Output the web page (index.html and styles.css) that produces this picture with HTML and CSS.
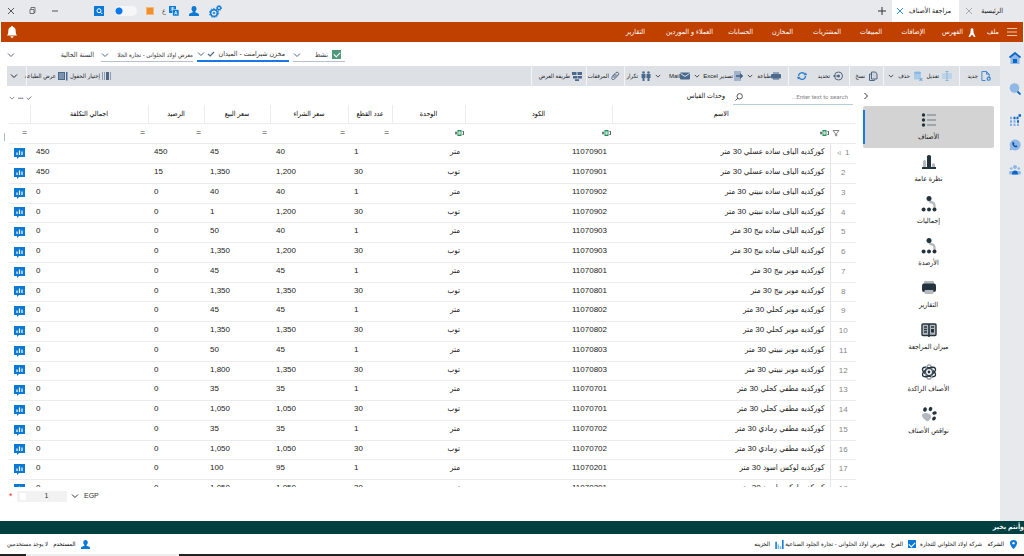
FILE: index.html
```html
<!DOCTYPE html>
<html lang="ar" dir="rtl">
<head>
<meta charset="utf-8">
<title>مراجعة الأصناف</title>
<link rel="stylesheet" href="styles.css">
</head>
<body>
<svg class="sprite" aria-hidden="true">
  <symbol id="chev" viewBox="0 0 8 8"><path d="M1 2.500 4 5.500 7 2.500" fill="none" stroke="currentColor"/></symbol>
  <symbol id="tick" viewBox="0 0 8 8"><path d="M1 4 3.200 6 7 2" fill="none" stroke="currentColor" stroke-width="1.200"/></symbol>
  <symbol id="cross" viewBox="0 0 8 8"><path d="M1 1 7 7M7 1 1 7" fill="none" stroke="currentColor"/></symbol>
  <symbol id="user" viewBox="0 0 12 12"><path d="M6 0c2 0 3 1.500 3 3.200C9 5 8 6 7.500 6.500v1L11 9c1 .5 1 1 1 3H0c0-2 0-2.500 1-3l3.500-1.500v-1C4 6 3 5 3 3.200 3 1.500 4 0 6 0z" fill="#0a7ad6"/></symbol>
  <symbol id="chat" viewBox="0 0 11 11"><path d="M0 0h11v9H5L3 11V9H0z" fill="#0a7ad6"/><path d="M3 4.500v2.500M5.500 2.500V7M8 3.500V7" stroke="#fff" stroke-width="1.200"/></symbol>
  <symbol id="abc" viewBox="0 0 9 8"><path d="M1 2.500v3M.2 4h2M7.500 2.500h1.200v3H7.500" fill="none" stroke="#444"/><rect x="2.500" y="1" width="4" height="6" fill="#1d9457"/><rect x="3.800" y="2.800" width="1.400" height="2.400" fill="none" stroke="#fff" stroke-width=".7"/></symbol>
  <symbol id="flow" viewBox="0 0 16 16"><path d="M8 2.500c-.5 6 5.500 2 5.500 7v4" fill="none" stroke="#b3b9bf" stroke-width="2.200"/><g fill="#23343f"><circle cx="8" cy="2.500" r="2.500"/><circle cx="2.600" cy="13.500" r="2"/><circle cx="8" cy="13.500" r="2"/><circle cx="13.500" cy="13.500" r="2"/></g></symbol>
</svg>

<header class="titlebar">
  <nav class="tabs">
    <button class="tab home">الرئيسية</button>
    <button class="close" aria-label="إغلاق"><svg class="i8"><use href="#cross"/></svg></button>
    <div class="tab-open"><button class="tab">مراجعة الأصناف</button><button class="close blue" aria-label="إغلاق"><svg class="i8"><use href="#cross"/></svg></button></div>
    <button class="plus" aria-label="جديد"><svg class="i8" viewBox="0 0 8 8"><path d="M4 0v8M0 4h8" stroke="#333"/></svg></button>
  </nav>
  <div class="window" dir="ltr">
    <button aria-label="إغلاق النافذة"><svg class="i8"><use href="#cross"/></svg></button>
    <button aria-label="استعادة"><svg class="i8" viewBox="0 0 8 8"><path d="M2 2V.5h4v5h-1M1 2.500h4v4H1z" fill="none" stroke="#555" stroke-width=".8"/></svg></button>
    <button aria-label="تصغير"><svg class="i8" viewBox="0 0 8 8"><path d="M1 4h6" stroke="#555"/></svg></button>
    <button class="find" aria-label="بحث"><svg viewBox="0 0 10 10"><rect width="10" height="10" fill="#0a7ad6"/><circle cx="5" cy="4.700" r="2" fill="none" stroke="#fff"/><path d="m6.500 6.200 1.700 1.700" stroke="#fff"/></svg></button>
    <input class="switch" type="checkbox" aria-label="الوضع">
    <span class="swatch"></span>
    <span class="lang">ع</span>
    <button aria-label="ترجمة"><svg viewBox="0 0 10 10"><rect width="7" height="7" fill="#0a7ad6"/><rect x="3.500" y="3.500" width="6.500" height="6.500" fill="#0a7ad6" stroke="#fff" stroke-width=".5"/><path d="M1.500 2h4M3.500 1v1c0 1-1 2-2 2.500M5.500 8.500 6.800 5 8 8.500M6 7.500h1.700" fill="none" stroke="#fff" stroke-width=".7"/></svg></button>
    <button aria-label="المستخدم"><svg viewBox="0 0 12 12"><use href="#user"/></svg></button>
    <button aria-label="الإعدادات"><svg class="gears" viewBox="0 0 13 13"><g fill="none" stroke="#0a7ad6"><circle cx="5" cy="8" r="3.300" stroke-width="1.500"/><circle cx="5" cy="8" r="4.600" stroke-dasharray="1.500 1.400"/><circle cx="5" cy="8" r=".8"/><circle cx="10" cy="3" r="1.600" stroke-width="1.200"/><circle cx="10" cy="3" r="2.500" stroke-dasharray="1 1"/></g></svg></button>
  </div>
</header>

<nav class="menubar">
  <button class="burger" aria-label="القائمة"><svg viewBox="0 0 10 10"><path d="M0 1.500h10M0 5h10M0 8.500h10" stroke="#f3c6ae"/></svg></button>
  <a href="#" class="m-file">ملف</a>
  <svg class="ribbon" viewBox="0 0 8 9"><circle cx="4" cy="1.800" r="1.500" fill="#fff"/><path d="M2.500 3h3v1.500L7.500 9H6L4 6.500 2 9H.5l2-4.500z" fill="#fff"/></svg>
  <a href="#" class="m-index">الفهرس</a>
  <a href="#" class="m-add">الإضافات</a>
  <a href="#" class="m-sales">المبيعات</a>
  <a href="#" class="m-buy">المشتريات</a>
  <a href="#" class="m-store">المخازن</a>
  <a href="#" class="m-acc">الحسابات</a>
  <a href="#" class="m-cust">العملاء و الموردين</a>
  <a href="#">التقارير</a>
  <button class="bell" aria-label="التنبيهات"><svg viewBox="0 0 10 12"><path d="M5 0c.7 0 1 .5 1 1 2 .5 2.700 2 2.700 4 0 2.500.5 3.500 1.300 4.500H0C.8 8.500 1.300 7.500 1.300 5c0-2 .7-3.500 2.700-4 0-.5.300-1 1-1zM3.500 10.200h3c0 2-3 2-3 0z" fill="#fff"/></svg></button>
</nav>

<div class="body">
  <aside class="rail">
    <button class="far" aria-label="المنزل"><svg viewBox="0 0 12 12"><path d="M1.500 5v7h9V5L6 1.500z" fill="#8fb8e6"/><path d="M.5 5.500 6 1l5.500 4.500" fill="none" stroke="#0a66c8" stroke-width="1.800"/><rect x="4" y="7" width="4" height="4" fill="#0a66c8"/></svg></button>
    <button class="far" aria-label="بحث"><svg viewBox="0 0 12 12"><circle cx="5.500" cy="5" r="4.800" fill="#8fb8e6"/><path d="m8.500 8.500 3 3" stroke="#0a66c8" stroke-width="1.800"/></svg></button>
    <button aria-label="التطبيقات"><svg viewBox="0 0 12 12"><path d="M1 4h2M1 7.500h2M1 11h2M4.500 7.500h2M4.500 11h2M8 11h2" stroke="#7fb0e6" stroke-width="2.400"/><path d="M4.500 4h2M8 7.500h2M7.500 4h2M9.500 1.500H12" stroke="#0a66c8" stroke-width="2.400"/></svg></button>
    <button aria-label="واتساب"><svg viewBox="0 0 12 12"><path d="M6 .5a5.500 5.500 0 1 1-2.500 10.300L.5 11.500l.8-3A5.500 5.500 0 0 1 6 .5z" fill="#8fb8e6"/><path d="M3.500 3.500c1-1 1.500 0 1.800 1 .2.800-.7.700 0 1.500s1.200 1 1.700.6c.8-.5 2 .8 1.200 1.400C6 9.500 2.500 6 3.500 3.500z" fill="#0a4fb0"/></svg></button>
    <button aria-label="الفريق"><svg viewBox="0 0 12 12"><g fill="#8fb8e6"><circle cx="6" cy="3" r="2"/><circle cx="2.200" cy="4.500" r="1.300"/><circle cx="9.800" cy="4.500" r="1.300"/><rect y="7" width="12" height="3.500" rx="1.500"/></g><path d="M3 10.500C3 8 4 6.500 6 6.500s3 1.500 3 4z" fill="#0a66c8"/></svg></button>
  </aside>

  <main class="main">
    <form class="filters">
      <label class="f-year"><select aria-label="السنة"><option>السنة الحالية</option></select><svg class="i8"><use href="#chev"/></svg></label>
      <label class="field f-branch"><select aria-label="الفرع"><option>معرض اولاد الحلوانى - تجارة الجلا</option></select><svg class="i8"><use href="#chev"/></svg></label>
      <label class="field focus f-store"><input type="text" aria-label="المخزن" value="مخزن شبرامنت - الميدان"><svg class="i8"><use href="#tick"/></svg><svg class="i8"><use href="#chev"/></svg></label>
      <label class="field f-active"><input class="green" type="checkbox" checked><span>نشط</span><svg class="i8"><use href="#chev"/></svg></label>
    </form>

    <div class="toolbar">
      <button class="t-new"><svg viewBox="0 0 11 11"><path d="M1 .5h5l3 3v3M5 10.500H1V.5M6 .5v3h3" fill="none" stroke="#2f7fd0"/><circle cx="8.500" cy="8.500" r="1.700" fill="none" stroke="#2f7fd0" stroke-width="1.300"/></svg>جديد</button>
      <button class="t-edit line"><svg viewBox="0 0 10 10"><rect y="2" width="10" height="6" fill="#bcd3e8"/><path d="M3.500.5h3M5 .5v9M3.500 9.500h3" stroke="#8fb3d6"/></svg>تعديل</button>
      <button class="t-del"><svg viewBox="0 0 10 10"><path d="M1 1.500h7v7H1z" fill="#a9cbea"/><ellipse cx="4.500" cy="1.800" rx="3.500" ry="1.300" fill="#8ab8e3"/><path d="m6.500 7 3 3M9.500 7l-3 3" stroke="#5b9bd8"/></svg>حذف</button>
      <button class="t-arrow" aria-label="المزيد"><svg class="i6" viewBox="0 0 8 8"><use href="#chev"/></svg></button>
      <button class="t-copy line"><svg viewBox="0 0 10 10"><path d="M3.500 1h4l1.500 2v5H3.500zM3 3H1.500v6.500h5V8.500" fill="#cdd4dc" stroke="#51677f"/></svg>نسخ</button>
      <button class="t-select line"><svg viewBox="0 0 10 10"><circle cx="5.500" cy="5" r="4" fill="none" stroke="#51677f"/><circle cx="5.500" cy="5" r="1.500" fill="#51677f"/><path d="M0 5h5" stroke="#51677f"/></svg>تحديد</button>
      <button class="t-refresh" aria-label="تحديث"><svg viewBox="0 0 10 10"><path d="M1.500 5a3.500 3.500 0 0 1 6.500-1.500M8.500 5A3.500 3.500 0 0 1 2 6.700" fill="none" stroke="#2f7fd0" stroke-width="1.300"/><path d="M6.500 4.300h3.500L9 1.500zM3.500 5.700H0L1 8.500z" fill="#2f7fd0"/></svg></button>
      <button class="t-print line"><svg viewBox="0 0 10 10"><rect x="2" y="1" width="6" height="8" fill="#90a2b8"/><rect y="3" width="10" height="4.500" rx="1" fill="#4b698d"/></svg>طباعة</button>
      <button class="t-arrow" aria-label="المزيد"><svg class="i6" viewBox="0 0 8 8"><use href="#chev"/></svg></button>
      <button class="t-excel"><svg viewBox="0 0 10 10"><rect x="1" y="0" width="7" height="10" fill="#a3b3c8"/><path d="M3 5h6M7 2.800 9.300 5 7 7.200" fill="none" stroke="#3f628c" stroke-width="1.400"/></svg>تصدير Excel</button>
      <button class="t-arrow" aria-label="المزيد"><svg class="i6" viewBox="0 0 8 8"><use href="#chev"/></svg></button>
      <button class="t-mail"><svg viewBox="0 0 10 10"><rect y="1.500" width="10" height="7" rx="1" fill="#4b698d"/><path d="m.5 2.500 4.500 3 4.500-3" fill="none" stroke="#dde1e6"/></svg>Mail</button>
      <button class="t-arrow" aria-label="المزيد"><svg class="i6" viewBox="0 0 8 8"><use href="#chev"/></svg></button>
      <button class="t-repeat"><svg viewBox="0 0 10 10"><g fill="#4b698d"><circle cx="2.500" cy="1.500" r="1.300"/><circle cx="7.500" cy="1.500" r="1.300"/><path d="M.5 3h4v4h-1v3h-2V7h-1zM5.500 3h4v4h-1v3h-2V7h-1z"/></g></svg>تكرار</button>
      <button class="t-clip line"><svg viewBox="0 0 10 10"><path d="M2 5.500 6 1.500c1.500-1 3.500.7 2.500 2.200L4.500 8C3 9.500 1 8 2 6.500l3.500-3.500M3.500 7l3.700-3.700" fill="none" stroke="#51677f"/></svg>المرفقات</button>
      <button class="t-view line"><svg viewBox="0 0 10 10"><path d="M0 1h4.500v3H0zM5.500 1H10v3H5.500zM1 5h4v2.500H1zM5.500 5H10v2.500H5.500zM3 8.300h4V10H3z" fill="#4b698d"/></svg>طريقة العرض</button>
      <span class="fill line"></span>
      <button class="t-fields"><svg viewBox="0 0 10 10"><path d="M.5 1v8M2.500 1v8M8.500 1v8" stroke="#8a9db4"/><rect x="4" y="1" width="3" height="8" fill="#51677f"/></svg>إختيار الحقول</button>
      <button class="t-preview"><svg viewBox="0 0 10 10"><rect x="0" y="1" width="7" height="8" fill="#4b698d"/><path d="M1 3h5M1 5h5M1 7h5" stroke="#dde1e6" stroke-width=".7"/><rect x="8" y="1" width="1.500" height="8.500" fill="#4b698d"/></svg>عرض الطباعة</button>
      <button class="t-more line" aria-label="المزيد"><svg class="i8"><use href="#chev"/></svg></button>
    </div>

    <div class="content">
      <nav class="side">
        <button class="collapse" aria-label="طي"><svg class="i8" viewBox="0 0 8 8"><path d="m2.500 1 3 3-3 3" fill="none" stroke="#333"/></svg></button>
        <a href="#" class="active"><svg viewBox="0 0 16 16"><path d="M6 3h9M6 8h9M6 13h9" stroke="#8f969c" stroke-width="1.500"/><g fill="#23343f"><circle cx="2.500" cy="3" r="1.700"/><circle cx="2.500" cy="8" r="1.700"/><circle cx="2.500" cy="13" r="1.700"/></g></svg>الأصناف</a>
        <a href="#"><svg viewBox="0 0 16 16"><path d="M2 14V7q1.500-2 3 0v7zM11 14v-4q1.500-1.500 3 0v4z" fill="#b3b9bf"/><path d="M6 14V2q2-2 4 0v12z" fill="#23343f"/><path d="M1 14h14" stroke="#23343f" stroke-width="2"/></svg>نظرة عامة</a>
        <a href="#"><svg><use href="#flow"/></svg>إجماليات</a>
        <a href="#"><svg><use href="#flow"/></svg>الأرصدة</a>
        <a href="#"><svg viewBox="0 0 16 16"><rect x="3" y="1" width="10" height="4" rx="1" fill="#b3b9bf"/><rect x="1" y="3.500" width="14" height="8.500" rx="2" fill="#23343f"/><rect x="3.500" y="10" width="9" height="4" rx="1" fill="#b3b9bf"/></svg>التقارير</a>
        <a href="#"><svg viewBox="0 0 16 16"><rect x="1" y="2" width="14" height="11.500" rx="1" fill="#b3b9bf" stroke="#23343f" stroke-width="1.400"/><path d="M8 2v13" stroke="#23343f" stroke-width="1.600"/><path d="M3 5h3M3 7.500h3M3 10h3M10 5h3" stroke="#23343f" stroke-width="1.300"/><rect x="10" y="7" width="3" height="3.500" fill="#23343f"/></svg>ميزان المراجعة</a>
        <a href="#"><svg viewBox="0 0 16 16"><g fill="none" stroke="#23343f" stroke-width="1.400"><ellipse cx="8" cy="8" rx="7.300" ry="3.500" transform="rotate(30 8 8)"/><ellipse cx="8" cy="8" rx="7.300" ry="3.500" transform="rotate(90 8 8)" stroke="#9da5ac"/><ellipse cx="8" cy="8" rx="7.300" ry="3.500" transform="rotate(150 8 8)"/></g><circle cx="8" cy="8" r="3.500" fill="#fff" stroke="#23343f"/><circle cx="8" cy="8" r="1.400" fill="#23343f"/></svg>الأصناف الراكدة</a>
        <a href="#"><svg viewBox="0 0 16 16"><path d="M2 7.500c3-1.500 7 0 8 2 1 2-1 3.500-2 5-2 1.500-3 .5-3.500-.5C1.500 12.500 0 9 2 7.500z" fill="#b3b9bf"/><g fill="#23343f"><ellipse cx="4" cy="3.500" rx="1.800" ry="2.200" transform="rotate(30 4 3.500)"/><ellipse cx="9.500" cy="3" rx="1.800" ry="2.200" transform="rotate(20 9.500 3)"/><ellipse cx="13.500" cy="7" rx="2.200" ry="1.700" transform="rotate(-20 13.500 7)"/><ellipse cx="13" cy="12.500" rx="2.200" ry="1.700" transform="rotate(-50 13 12.500)"/></g></svg>نواقص الأصناف</a>
      </nav>

      <section class="sheet">
        <div class="searchrow">
          <label class="search"><input type="text" aria-label="بحث" placeholder="Enter text to search..."><svg class="i8" viewBox="0 0 8 8"><circle cx="4.700" cy="3.300" r="2.700" fill="none" stroke="#444" stroke-width=".9"/><path d="M2.800 5.200.5 7.500" stroke="#444"/></svg></label>
          <a href="#" class="units">وحدات القياس</a>
          <div class="mini"><svg class="i6" viewBox="0 0 8 8"><use href="#tick"/></svg><span class="dots">•••</span><svg class="i6" viewBox="0 0 8 8"><use href="#chev"/></svg></div>
        </div>
        <div class="scroll">
          <table>
            <colgroup><col class="c-n"><col><col class="c-code"><col class="c-unit"><col class="c-count"><col class="c-buy"><col class="c-sale"><col class="c-bal"><col class="c-total"><col class="c-icon"></colgroup>
            <thead>
              <tr class="heads"><th></th><th>الاسم</th><th>الكود</th><th>الوحدة</th><th>عدد القطع</th><th>سعر الشراء</th><th>سعر البيع</th><th>الرصيد</th><th>اجمالي التكلفة</th><th></th></tr>
              <tr class="ops"><td class="funnel"><svg class="i8" viewBox="0 0 8 8"><path d="M1 1.500h6L4.700 4.300V7l-1.400-.7v-2z" fill="none" stroke="#666" stroke-width=".8"/></svg></td><td class="match"><svg><use href="#abc"/></svg></td><td class="match"><svg><use href="#abc"/></svg></td><td class="match"><svg><use href="#abc"/></svg></td><td>=</td><td>=</td><td>=</td><td>=</td><td>=</td><td>=</td></tr>
            </thead>
            <tbody id="rows"></tbody>
          </table>
        </div>
        <div class="pager" dir="ltr">
          <span class="star">*</span>
          <label class="rate"><span></span><input type="text" value="1" aria-label="سعر الصرف"></label>
          <button aria-label="العملة"><svg class="i8"><use href="#chev"/></svg></button>
          <span>EGP</span>
        </div>
      </section>
      <div class="grip"></div>
    </div>
  </main>
</div>

<div class="ticker">وأنتم بخير</div>
<footer class="status">
  <svg viewBox="0 0 10 10"><path d="M5 0c5 0 5.500 5 0 10C-.5 5 0 0 5 0z" fill="#0a7ad6"/><circle cx="5" cy="3.500" r="1.300" fill="#fff"/></svg>
  <b class="s-co">الشركة</b><span class="s-coname">شركة اولاد الحلواني للتجارة</span>
  <input class="bluebox" type="checkbox" id="br" checked><label for="br" class="s-br">الفرع</label><span class="s-brname">معرض اولاد الحلوانى - تجارة الجلود الصناعية</span>
  <svg viewBox="0 0 10 10"><path d="M1.200 2v8M8.700 0v10" stroke="#0a7ad6" stroke-width="1.700"/><path d="M3.700 5v5M6.200 7v3" stroke="#7db8ea" stroke-width="1.700"/></svg>
  <b>الخزينه</b>
  <span class="fill"></span>
  <svg viewBox="0 0 12 12"><use href="#user"/></svg><b class="s-user">المستخدم</b><span>لا يوجد مستخدمين</span>
</footer>
<div class="taskbar"><span></span></div>
<script src="app.js"></script>
</body>
</html>
```
FILE: styles.css
```css
* { box-sizing: border-box; }
body {
  margin: 0; height: 100vh; display: flex; flex-direction: column; overflow: hidden;
  background: #fff; color: #333; font: 7px/10px "Liberation Sans", "DejaVu Sans Condensed", "DejaVu Sans", sans-serif;
}
button, input, select { font: inherit; color: inherit; background: none; border: 0; padding: 0; margin: 0; outline: 0; }
button { display: flex; align-items: center; white-space: nowrap; flex: none; }
a { color: inherit; text-decoration: none; white-space: nowrap; }
svg { flex: none; display: block; width: 10px; height: 10px; }
symbol { overflow: visible; }
.sprite { position: absolute; width: 0; height: 0; }
.i8 { width: 8px; height: 8px; }
.i6 { width: 6px; height: 6px; }
.fill { flex: 1; }

.titlebar { display: flex; justify-content: space-between; height: 22px; flex: none; background: #e8e9ed; }
.tabs { display: flex; align-items: center; padding-right: 21px; }
.tab { color: #111; }
.home { width: 30px; }
.close { color: #aaa; }
.blue { color: #2f8fdc; }
.tab-open { display: flex; align-items: center; justify-content: space-between; width: 67px; height: 22px; margin-right: 6px; padding: 0 8px 0 4px; background: #fff; }
.plus { margin-right: 6px; }
.window { display: flex; align-items: center; padding-left: 7px; color: #555; }
.window button { width: 22px; }
.window .find { width: 21px; margin-left: 21px; }
.switch { appearance: none; width: 22px; height: 10px; border-radius: 5px; background: radial-gradient(circle at 4px 5px, #0a78f0 3px, #f6f6f8 4px); }
.swatch { width: 8px; height: 8px; margin: 0 8px 0 9px; background: #f0902c; border: 1px solid #f7b877; }
.lang { width: 7px; }
.window .gears { width: 13px; height: 13px; }
.window .lang ~ button { width: 20px; }

.menubar { display: flex; align-items: center; height: 20px; flex: none; margin: 0 1px; padding: 0 6px 0 5px; background: #c04000; color: #fff; }
.menubar a { flex: none; }
.burger { width: 18px; }
.m-file { width: 23px; }
.ribbon { width: 8px; height: 9px; margin-left: 5px; }
.m-index { width: 38px; }
.m-add { width: 43px; }
.m-sales { width: 41px; }
.m-buy { width: 48px; }
.m-store { width: 40px; }
.m-acc { width: 40px; }
.m-cust { width: 68px; }
.bell { margin-right: auto; }
.bell svg { width: 12px; height: 12px; }

.body { flex: 1; min-height: 0; display: flex; }
.rail { width: 24px; flex: none; display: flex; flex-direction: column; align-items: flex-start; gap: 13px; padding: 10px 3px 0 0; background: #e8e9ed; }
.rail .far { margin-bottom: 6px; }
.rail svg { width: 12px; height: 12px; }
.main { flex: 1; min-width: 0; display: flex; flex-direction: column; }

.filters { display: flex; flex-direction: row-reverse; justify-content: flex-start; align-items: center; height: 24px; padding-left: 7px; gap: 4px; }
.filters label { display: flex; align-items: center; height: 14px; margin-top: 2px; }
.filters select { appearance: none; flex: 1; min-width: 0; overflow: hidden; }
.filters input[type="text"] { flex: 1; min-width: 0; }
.filters svg { color: #51677f; }
.field { border-bottom: 1px solid #b9bfd0; }
.f-year { width: 87px; }
.filters .f-branch { width: 92px; margin-left: 3px; font-size: 6px; }
.f-store { width: 92px; padding-right: 4px; gap: 2px; }
.focus { border-bottom: 2px solid #1a78e6; }
.f-active { width: 52px; padding-right: 4px; gap: 4px; }
.f-active svg { margin-right: auto; }
.green { appearance: none; width: 9px; height: 9px; background: #4f9a7c; }
.green::after, .bluebox::after { content: ""; display: block; width: 3px; height: 5px; margin: 1px auto; border: solid #fff; border-width: 0 1px 1px 0; transform: rotate(45deg); }

.toolbar { display: flex; align-items: stretch; height: 20px; flex: none; margin-left: 7px; padding-right: 9px; background: #dde1e6; color: #222; font-size: 6px; }
.toolbar button { gap: 3px; }
.line { border-right: 1px solid #f3f5f7; }
.t-new { width: 31px; }
.toolbar .t-edit { width: 37px; padding-right: 7px; }
.t-del { width: 29px; }
.t-arrow { width: 10px; }
.toolbar .t-copy { width: 34px; padding-right: 5px; }
.toolbar .t-select { width: 43px; padding-right: 6px; }
.t-refresh { width: 18px; }
.toolbar .t-print { width: 36px; padding-right: 7px; gap: 0; }
.toolbar .t-excel { width: 43px; gap: 0; }
.toolbar .t-mail { width: 29px; gap: 0; }
.t-repeat { width: 26px; }
.toolbar .t-clip { width: 38px; padding-right: 4px; gap: 1px; }
.toolbar .t-view { width: 55px; padding-right: 4px; gap: 2px; }
.t-fields { width: 44px; }
.toolbar .t-fields, .toolbar .t-preview { gap: 2px; }
.t-preview { width: 41px; }
.toolbar .t-more { width: 20px; padding-right: 8px; }

.content { flex: 1; min-height: 0; display: flex; }
.side { width: 137px; flex: none; display: flex; flex-direction: column; padding-right: 6px; }
.collapse { height: 20px; padding-right: 124px; }
.side a { height: 42px; display: flex; flex-direction: column; align-items: center; gap: 3px; padding-top: 6px; line-height: 12px; color: #111; }
.side a svg { width: 16px; height: 16px; }
.side .active { background: linear-gradient(#1a78e6, #1a78e6) left center / 2px 34px no-repeat #d3d3d3; border-radius: 2px; }

.sheet { flex: 1; min-width: 0; display: flex; flex-direction: column; padding: 0 7px 0 4px; }
.grip { width: 1px; height: 8px; flex: none; margin: 47px 0 0 4px; background: #b3b9cf; }
.searchrow { display: flex; align-items: center; height: 19px; flex: none; }
.search { display: flex; align-items: center; width: 120px; height: 14px; margin: 4px 3px 0 8px; padding: 0 5px 0 2px; border-bottom: 1px solid #b7cde2; }
.search input { flex: 1; min-width: 0; font-family: Roboto, sans-serif; font-size: 6px; }
.search input::placeholder { color: #888; }
.units { color: #111; }
.mini { display: flex; align-items: center; gap: 3px; margin-right: auto; padding-top: 5px; color: #667; }
.dots { font-size: 5px; }

.scroll { flex: 1; min-height: 0; overflow: hidden; }
table { width: 100%; table-layout: fixed; border-collapse: collapse; color: #222; font-size: 8px; line-height: 12px; }
.c-n { width: 26px; }
.c-code { width: 147px; }
.c-unit { width: 73px; }
.c-count { width: 44px; }
.c-buy { width: 78px; }
.c-sale { width: 66px; }
.c-bal { width: 56px; }
.c-total { width: 118px; }
.c-icon { width: 21px; }
th, td { padding: 0; border-bottom: 1px solid #ebecf0; white-space: nowrap; overflow: hidden; }
th { font-size: 7px; font-weight: normal; color: #000; border-left: 1px solid #ebecf0; }
th:first-child, th:last-child { border-left: 0; }
tr { height: 20px; }
.heads { height: 18px; }
tbody tr:nth-child(4n) { height: 19px; }
.ops td { padding-right: 3px; text-align: right; font-weight: bold; color: #888; }
.ops .match { padding-right: 1px; }
.match svg { width: 9px; height: 8px; }
.ops .funnel { padding-right: 16px; }
.num { text-align: center; color: #888; border-left: 1px solid #e4e5ea; }
.name, .unit, .code { padding-right: 5px; text-align: right; }
td.name, td.unit, td.code, td.val { padding-bottom: 2px; }
.val { padding-left: 6px; text-align: left; direction: ltr; }
.chat { padding-right: 5px; }
.chat svg { width: 11px; height: 11px; }

.pager { display: flex; align-items: center; height: 34px; flex: none; padding-bottom: 16px; }
.star { width: 8px; color: #f03030; font-size: 9px; }
.rate { display: flex; align-items: center; width: 50px; height: 11px; padding-left: 3px; background: #f2f2f2; }
.rate span { width: 6px; height: 7px; background: #fff; }
.rate input { flex: 1; min-width: 0; text-align: center; }
.pager button { margin: 0 5px 0 4px; }

.ticker { height: 13px; flex: none; background: #004040; color: #fff; line-height: 12px; font-weight: bold; }
.status { display: flex; align-items: center; height: 20px; flex: none; padding: 0 6px 0 7px; gap: 5px; white-space: nowrap; color: #222; font-size: 6px; }
.status b, .status label { font-weight: normal; color: #000; }
.status svg { width: 9px; height: 9px; }
.status .s-co { width: 17px; }
.s-coname { width: 61px; }
.bluebox { appearance: none; width: 8px; height: 8px; background: #0a7ad6; }
.s-br { width: 13px; }
.s-brname { width: 96px; }
.taskbar { height: 2px; flex: none; background: #222; direction: ltr; padding-left: 26px; }
.taskbar span { display: block; width: 153px; height: 2px; background: #eee; }
```
FILE: app.js
```js
const colors = [
  ["110709", "01", "الياف ساده عسلي", 40, 45, "1,200", "1,350"],
  ["110709", "02", "الياف ساده نبيتي", 40, 40, "1,200", "1"],
  ["110709", "03", "الياف ساده بيج", 40, 50, "1,200", "1,350"],
  ["110708", "01", "موبر بيج", 45, 45, "1,350", "1,350"],
  ["110708", "02", "موبر كحلي", 45, 45, "1,350", "1,350"],
  ["110708", "03", "موبر نبيتي", 45, 50, "1,350", "1,800"],
  ["110707", "01", "مطفي كحلي", 35, 35, "1,050", "1,050"],
  ["110707", "02", "مطفي رمادي", 35, 35, "1,050", "1,050"],
  ["110702", "01", "لوكس اسود", 95, 100, "1,050", "1,050"],
];

const rows = colors.flatMap(([group, id, name, buy, sale, rollBuy, rollSale], i) => [
  { code: group + id, name, unit: "متر", count: 1, buy, sale, balance: i ? 0 : 450, total: i ? 0 : 450 },
  { code: group + id, name, unit: "توب", count: 30, buy: rollBuy, sale: rollSale, balance: i ? 0 : 15, total: i ? 0 : 450 },
]);

document.getElementById("rows").innerHTML = rows.map((r, i) => `<tr>
  <td class="num">${i + 1}${i ? "" : "&nbsp; ◃"}</td>
  <td class="name">كوركديه ${r.name} 30 متر</td>
  <td class="code">${r.code}</td>
  <td class="unit">${r.unit}</td>
  <td class="val">${r.count}</td>
  <td class="val">${r.buy}</td>
  <td class="val">${r.sale}</td>
  <td class="val">${r.balance}</td>
  <td class="val">${r.total}</td>
  <td class="chat"><svg><use href="#chat"/></svg></td>
</tr>`).join("");
```
